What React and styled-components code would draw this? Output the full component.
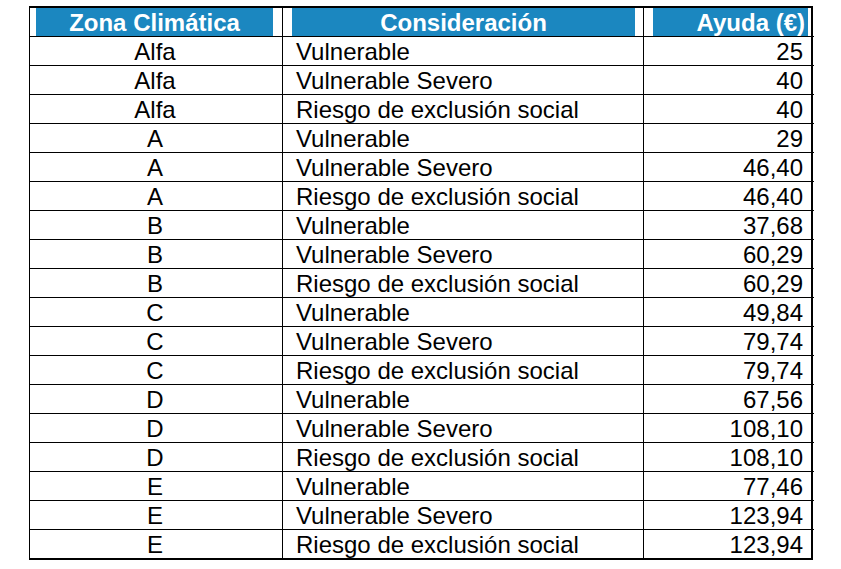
import React from "react";
import styled, { createGlobalStyle } from "styled-components";

const GlobalStyle = createGlobalStyle`
  body {
    margin: 0;
    background: #fff;
    font-family: "Liberation Sans", Arial, sans-serif;
  }
`;

const Page = styled.div`
  padding: 6px 0 0 29px;
`;

const Table = styled.div`
  display: grid;
  grid-template-columns: 253px 361px 170px;
  width: 784px;
  box-sizing: border-box;
  border-top: 2px solid #000;
  border-left: 1px solid #000;
  border-right: 2px solid #000;
  border-bottom: 2px solid #000;
  color: #000;
  font-size: 24px;
`;

const HeadCell = styled.div`
  box-sizing: border-box;
  height: 28px;
  padding: 0 ${(p) => p.$insetRight}px 0 ${(p) => p.$insetLeft}px;
  border-right: ${(p) => (p.$last ? "none" : "1px solid #000")};
`;

const HeadFill = styled.div`
  height: 28px;
  line-height: 29px;
  background: #1b87c0;
  color: #fff;
  font-weight: bold;
  text-align: ${(p) => p.$align};
  padding-right: ${(p) => (p.$align === "right" ? "3px" : "0")};
  white-space: nowrap;
  overflow: hidden;
`;

const Cell = styled.div`
  box-sizing: border-box;
  height: 29px;
  line-height: 29px;
  border-top: 1px solid #000;
  border-right: ${(p) => (p.$last ? "none" : "1px solid #000")};
  text-align: ${(p) => p.$align};
  padding: 0 ${(p) => p.$padRight}px 0 ${(p) => p.$padLeft}px;
  white-space: nowrap;
`;

const zones = ["Alfa", "A", "B", "C", "D", "E"];
const kinds = ["Vulnerable", "Vulnerable Severo", "Riesgo de exclusión social"];
const amounts = [
  ["25", "40", "40"],
  ["29", "46,40", "46,40"],
  ["37,68", "60,29", "60,29"],
  ["49,84", "79,74", "79,74"],
  ["67,56", "108,10", "108,10"],
  ["77,46", "123,94", "123,94"],
];

const rows = zones.flatMap((zone, i) =>
  kinds.map((kind, j) => ({ zone, kind, amount: amounts[i][j] }))
);

export default function App() {
  return (
    <Page>
      <GlobalStyle />
      <Table>
        <HeadCell $insetLeft={6} $insetRight={9}>
          <HeadFill $align="center">Zona Climática</HeadFill>
        </HeadCell>
        <HeadCell $insetLeft={9} $insetRight={8}>
          <HeadFill $align="center">Consideración</HeadFill>
        </HeadCell>
        <HeadCell $insetLeft={9} $insetRight={6} $last>
          <HeadFill $align="right">Ayuda (€)</HeadFill>
        </HeadCell>

        {rows.map((r, i) => (
          <React.Fragment key={i}>
            <Cell $align="center" $padLeft={0} $padRight={2}>
              {r.zone}
            </Cell>
            <Cell $align="left" $padLeft={13} $padRight={0}>
              {r.kind}
            </Cell>
            <Cell $align="right" $padLeft={0} $padRight={11} $last>
              {r.amount}
            </Cell>
          </React.Fragment>
        ))}
      </Table>
    </Page>
  );
}
